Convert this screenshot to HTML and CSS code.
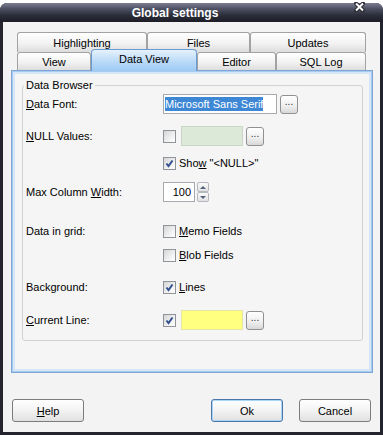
FILE: index.html
```html
<!DOCTYPE html>
<html>
<head>
  <title>Global settings</title>
  <link rel="stylesheet" href="styles.css">
</head>
<body>

  <div class="window">
    <div class="titlebar">
      <span class="title">Global settings</span>
      <svg class="close" width="11" height="10" viewBox="0 0 11 10">
        <path d="M2 1.5 L9 8.5 M9 1.5 L2 8.5" stroke="#2a2b33" stroke-width="4" stroke-linecap="square"/>
        <path d="M2 1.5 L9 8.5 M9 1.5 L2 8.5" stroke="#ffffff" stroke-width="2"/>
      </svg>
    </div>

    <div class="client">
      <div class="tabs">
        <div class="tab-row back">
          <div class="tab tab-highlighting">Highlighting</div>
          <div class="tab tab-files">Files</div>
          <div class="tab tab-updates">Updates</div>
        </div>
        <div class="tab-row front">
          <div class="tab tab-view">View</div>
          <div class="tab tab-dataview active">Data View</div>
          <div class="tab tab-editor">Editor</div>
          <div class="tab tab-sqllog">SQL Log</div>
        </div>
      </div>

      <div class="panel">
        <fieldset class="group">
          <legend>Data Browser</legend>

          <div class="row">
            <span class="label"><u>D</u>ata Font:</span>
            <div class="edit font-edit"><span class="selected">Microsoft Sans Serif</span></div>
            <div class="dots">...</div>
          </div>

          <div class="row gap-12">
            <span class="label"><u>N</u>ULL Values:</span>
            <span class="check"></span>
            <div class="swatch green"></div>
            <div class="dots">...</div>
          </div>

          <div class="row short gap-9">
            <span class="label"></span>
            <span class="check on"><svg width="11" height="11" viewBox="0 0 11 11"><path d="M2.5 5.5 L4.5 8 L8.5 2.5" fill="none" stroke="#33508f" stroke-width="2"/></svg></span>
            <span class="opt">Sho<u>w</u> "&lt;NULL&gt;"</span>
          </div>

          <div class="row gap-11">
            <span class="label">Max Column <u>W</u>idth:</span>
            <div class="edit num-edit">100</div>
            <div class="spin">
              <div class="spin-btn"><span class="arrow up"></span></div>
              <div class="spin-btn"><span class="arrow down"></span></div>
            </div>
          </div>

          <div class="row short gap-21">
            <span class="label">Data in grid:</span>
            <span class="check"></span>
            <span class="opt"><u>M</u>emo Fields</span>
          </div>

          <div class="row short gap-8">
            <span class="label"></span>
            <span class="check"></span>
            <span class="opt"><u>B</u>lob Fields</span>
          </div>

          <div class="row short gap-16">
            <span class="label">Background:</span>
            <span class="check on"><svg width="11" height="11" viewBox="0 0 11 11"><path d="M2.5 5.5 L4.5 8 L8.5 2.5" fill="none" stroke="#33508f" stroke-width="2"/></svg></span>
            <span class="opt"><u>L</u>ines</span>
          </div>

          <div class="row gap-15">
            <span class="label"><u>C</u>urrent Line:</span>
            <span class="check on"><svg width="11" height="11" viewBox="0 0 11 11"><path d="M2.5 5.5 L4.5 8 L8.5 2.5" fill="none" stroke="#33508f" stroke-width="2"/></svg></span>
            <div class="swatch yellow"></div>
            <div class="dots">...</div>
          </div>
        </fieldset>
      </div>

      <div class="buttons">
        <div class="btn"><span><u>H</u>elp</span></div>
        <div class="spacer"></div>
        <div class="btn default">Ok</div>
        <div class="btn cancel">Cancel</div>
      </div>
    </div>
  </div>

</body>
</html>
```

FILE: styles.css
```css
body {
  margin: 0;
  background: #fff;
  font-family: "Liberation Sans", Arial, sans-serif;
  font-size: 11px;
  color: #000;
}

/* window frame */
.window {
  margin-top: 3px;
  height: 432px;
  background: #23242e;
  border-radius: 7px 7px 0 0;
  display: flex;
  flex-direction: column;
}

.titlebar {
  position: relative;
  flex: none;
  height: 19px;
  border-radius: 7px 7px 0 0;
  background: linear-gradient(#7b7f91 0%, #4e5163 30%, #2b2d3a 65%, #1c1d26 100%);
  display: flex;
  align-items: center;
  justify-content: center;
  padding-right: 33px;
  color: #fff;
  font-weight: bold;
  font-size: 12px;
}

.close {
  position: absolute;
  left: 354px;
  top: -1px;
}

.client {
  flex: 1;
  margin: 0 3px 3px;
  background: #f3f3f3;
  padding: 10px 7px 0 8px;
  display: flex;
  flex-direction: column;
}

/* tabs */
.tabs {
  padding: 0 7px 0 6px;
}

.tab-row {
  display: flex;
}

.tab {
  box-sizing: border-box;
  border: 1px solid #a2a2a2;
  border-bottom: none;
  border-radius: 3px 3px 0 0;
  background: linear-gradient(#ffffff, #f2f2f2 55%, #dddddd);
  display: flex;
  align-items: center;
  justify-content: center;
}

.tab-row.back .tab { height: 20px; }

.tab-row.front {
  height: 18px;
  align-items: flex-end;
}

.tab-row.front .tab { height: 18px; }

.tab-highlighting { width: 130px; }
.tab-files { width: 103px; }
.tab-updates { width: 116px; }
.tab-view { width: 74px; }
.tab-dataview { width: 106px; }
.tab-editor { width: 79px; }
.tab-sqllog { width: 90px; }

.tab-row.front .tab.active {
  position: relative;
  z-index: 1;
  height: 22px;
  margin-bottom: -1px;
  padding-bottom: 3px;
  border-color: #6b9bd3;
  border-radius: 4px 4px 0 0;
  background: linear-gradient(#e6f2fd, #bedcf8 50%, #9dcaf3);
}

/* page panel */
.panel {
  height: 303px;
  box-sizing: border-box;
  border: 1px solid #7ea5d5;
  box-shadow: inset 0 0 0 1px #a9cbef, inset 0 0 0 3px #d4e6f8;
  background: #f5f5f5;
  padding: 8px 9px 31px 10px;
  display: flex;
  flex-direction: column;
}

.group {
  flex: 1;
  margin: 0;
  min-width: 0;
  border: 1px solid #d2d2ce;
  border-radius: 3px;
  padding: 2px 0 0 3px;
}

.group legend {
  padding: 0 2px;
  margin-left: -2px;
  line-height: 13px;
}

.row {
  display: flex;
  align-items: center;
  height: 20px;
}

.row.short { height: 16px; }

.gap-8 { margin-top: 8px; }
.gap-9 { margin-top: 9px; }
.gap-11 { margin-top: 11px; }
.gap-12 { margin-top: 12px; }
.gap-15 { margin-top: 15px; }
.gap-16 { margin-top: 16px; }
.gap-21 { margin-top: 21px; }

.label {
  width: 137px;
  flex: none;
}

/* inputs */
.edit {
  box-sizing: border-box;
  height: 20px;
  border: 1px solid #a5a8ad;
  background: #fff;
}

.font-edit {
  width: 114px;
  padding: 2px 1px;
  white-space: nowrap;
  overflow: hidden;
}

.selected {
  display: inline-block;
  background: #3d87d5;
  color: #fff;
  line-height: 14px;
}

.num-edit {
  width: 32px;
  text-align: right;
  padding-right: 3px;
  line-height: 18px;
}

.swatch {
  box-sizing: border-box;
  width: 62px;
  height: 20px;
  margin-left: 5px;
  border: 1px solid #cbd6c8;
}

.swatch.green { background: #dce9d9; }
.swatch.yellow { background: #ffff80; border-color: #e6e6a8; }

.dots {
  box-sizing: border-box;
  width: 18px;
  height: 19px;
  margin-left: 3px;
  border: 1px solid #8e9092;
  border-radius: 3px;
  background: linear-gradient(#ffffff, #eeeeee 60%, #d8d8d8);
  text-align: center;
  font-size: 10px;
  line-height: 12px;
  color: #333;
}

.check {
  box-sizing: border-box;
  flex: none;
  width: 13px;
  height: 13px;
  border: 1px solid #8f939a;
  background: linear-gradient(135deg, #d5d5d5, #f3f3f3 65%, #ffffff);
}

.check svg { display: block; }

.opt { margin-left: 3px; }

.spin {
  margin-left: 2px;
  width: 12px;
  height: 20px;
  display: flex;
  flex-direction: column;
}

.spin-btn {
  flex: 1;
  box-sizing: border-box;
  border: 1px solid #b4b8be;
  border-radius: 2px;
  background: linear-gradient(#fafafa, #e2e2e2);
  display: flex;
  align-items: center;
  justify-content: center;
}

.arrow {
  width: 0;
  height: 0;
  border-left: 3px solid transparent;
  border-right: 3px solid transparent;
}

.arrow.up { border-bottom: 3px solid #56627d; }
.arrow.down { border-top: 3px solid #56627d; }

/* dialog buttons */
.buttons {
  display: flex;
  margin: 26px 2px 0 1px;
}

.spacer { flex: 1; }

.btn {
  box-sizing: border-box;
  width: 72px;
  height: 23px;
  border: 1px solid #7c7c7c;
  border-radius: 3px;
  background: linear-gradient(#ffffff, #f3f3f3 50%, #e0e0e0);
  display: flex;
  align-items: center;
  justify-content: center;
}

.btn.default {
  border-color: #4a76ab;
  box-shadow: inset 0 0 0 1px #a9d6f5;
}

.btn.cancel { margin-left: 16px; }
```
